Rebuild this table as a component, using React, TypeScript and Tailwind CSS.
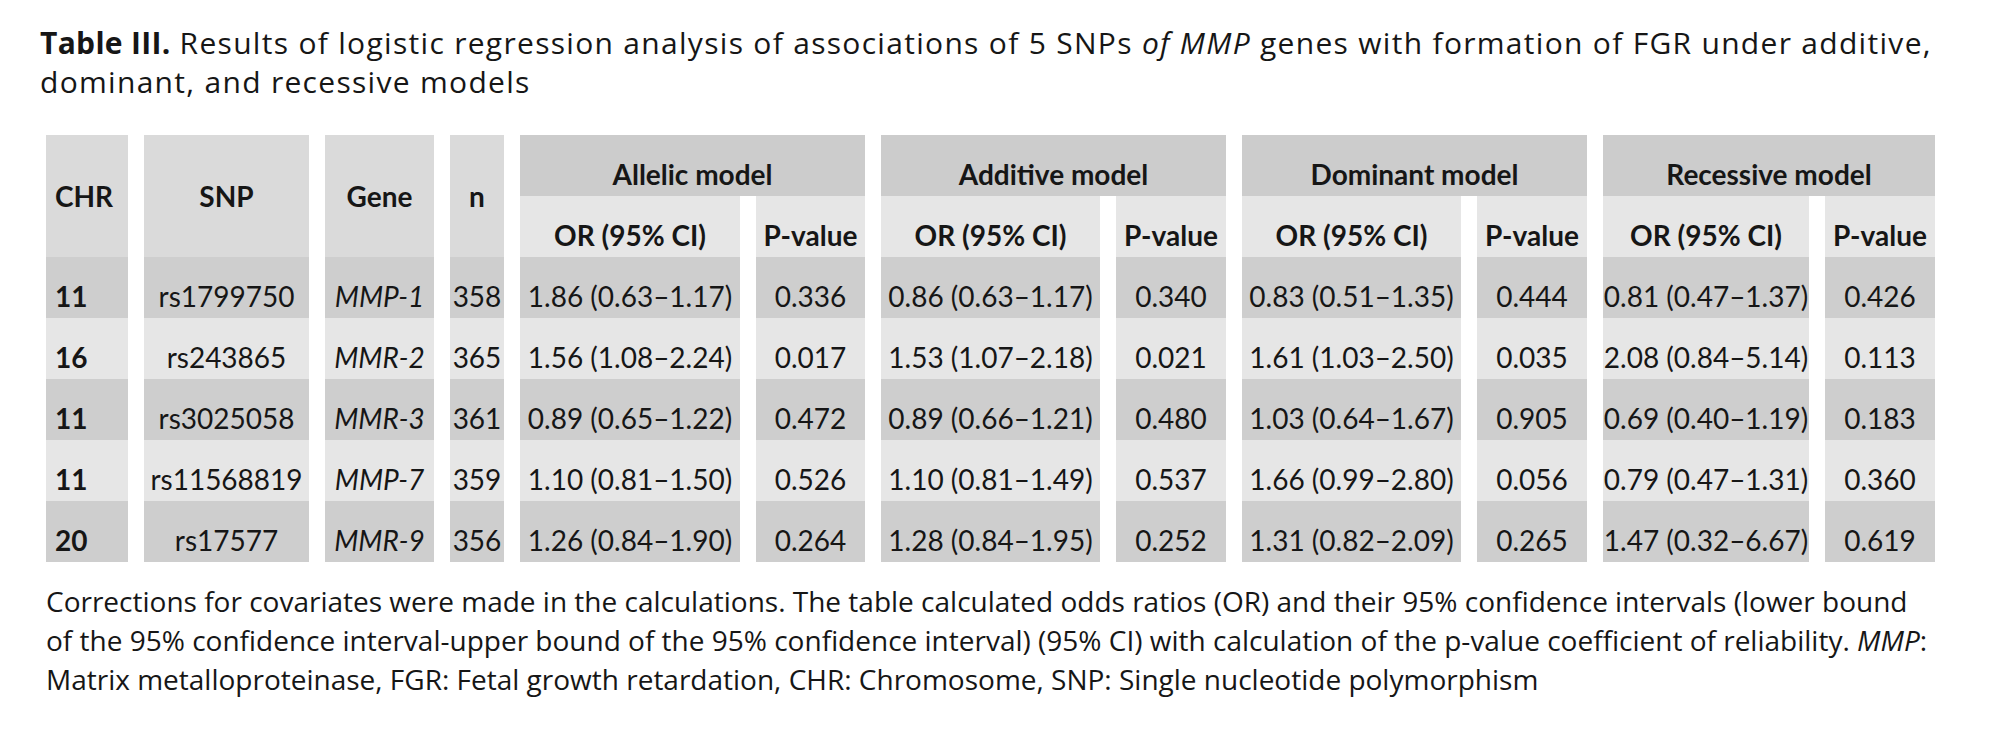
import React from "react";

type Row = { chr: string; snp: string; gene: string; n: string; v: string[] };

const rows: Row[] = [
  { chr: "11", snp: "rs1799750", gene: "MMP-1", n: "358", v: ["1.86 (0.63–1.17)", "0.336", "0.86 (0.63–1.17)", "0.340", "0.83 (0.51–1.35)", "0.444", "0.81 (0.47–1.37)", "0.426"] },
  { chr: "16", snp: "rs243865", gene: "MMR-2", n: "365", v: ["1.56 (1.08–2.24)", "0.017", "1.53 (1.07–2.18)", "0.021", "1.61 (1.03–2.50)", "0.035", "2.08 (0.84–5.14)", "0.113"] },
  { chr: "11", snp: "rs3025058", gene: "MMR-3", n: "361", v: ["0.89 (0.65–1.22)", "0.472", "0.89 (0.66–1.21)", "0.480", "1.03 (0.64–1.67)", "0.905", "0.69 (0.40–1.19)", "0.183"] },
  { chr: "11", snp: "rs11568819", gene: "MMP-7", n: "359", v: ["1.10 (0.81–1.50)", "0.526", "1.10 (0.81–1.49)", "0.537", "1.66 (0.99–2.80)", "0.056", "0.79 (0.47–1.31)", "0.360"] },
  { chr: "20", snp: "rs17577", gene: "MMR-9", n: "356", v: ["1.26 (0.84–1.90)", "0.264", "1.28 (0.84–1.95)", "0.252", "1.31 (0.82–2.09)", "0.265", "1.47 (0.32–6.67)", "0.619"] },
];

const models = ["Allelic model", "Additive model", "Dominant model", "Recessive model"];

const cell = "h-[61px] flex items-center justify-center pt-[18px] whitespace-nowrap";

export default function App() {
  return (
    <div className="min-h-[741px] bg-white text-[#161616] font-['Lato',sans-serif] text-[28px] leading-[39px]">
      <div className="pl-[40px] pt-[23px] font-['Open_Sans',sans-serif] text-[30px] tracking-[1.3px]">
        <p>
          <span className="block whitespace-nowrap">
            <span className="font-bold tracking-[0.3px]">Table III.</span> Results of logistic regression analysis of
            associations of 5 SNPs <i>of MMP</i> genes with formation of FGR under additive,
          </span>
          <span className="block whitespace-nowrap">dominant, and recessive models</span>
        </p>
      </div>
      <div className="pl-[46px] mt-[34px]">
        <div className="grid grid-cols-[82px_165px_109px_54px_220px_109px_219px_110px_219px_110px_206px_110px] gap-x-4 w-max">
          <div className="row-span-2 bg-[#dadada] font-bold flex items-center pl-[9px]">CHR</div>
          <div className="row-span-2 bg-[#dadada] font-bold flex items-center justify-center">SNP</div>
          <div className="row-span-2 bg-[#dadada] font-bold flex items-center justify-center">Gene</div>
          <div className="row-span-2 bg-[#dadada] font-bold flex items-center justify-center">n</div>
          {models.map((m) => (
            <div key={m} className={`col-span-2 bg-[#cccccc] font-bold ${cell}`}>
              {m}
            </div>
          ))}
          {models.map((m) => (
            <React.Fragment key={m + "s"}>
              <div className={`bg-[#e6e6e6] font-bold ${cell}`}>OR (95% CI)</div>
              <div className={`bg-[#e6e6e6] font-bold ${cell}`}>P-value</div>
            </React.Fragment>
          ))}
          {rows.map((r, i) => {
            const bg = i % 2 === 0 ? "bg-[#cecece]" : "bg-[#e6e6e6]";
            return (
              <React.Fragment key={r.snp}>
                <div className={`${bg} h-[61px] flex items-center pt-[18px] pl-[9px] font-bold`}>{r.chr}</div>
                <div className={`${bg} ${cell}`}>{r.snp}</div>
                <div className={`${bg} ${cell} italic`}>{r.gene}</div>
                <div className={`${bg} ${cell}`}>{r.n}</div>
                {r.v.map((x, j) => (
                  <div key={j} className={`${bg} ${cell}`}>
                    {x}
                  </div>
                ))}
              </React.Fragment>
            );
          })}
        </div>
        <p className="mt-[20px] font-['Open_Sans',sans-serif]">
          <span className="block whitespace-nowrap">
            Corrections for covariates were made in the calculations. The table calculated odds ratios (OR) and their 95%
            confidence intervals (lower bound
          </span>
          <span className="block whitespace-nowrap">
            of the 95% confidence interval-upper bound of the 95% confidence interval) (95% CI) with calculation of the
            p-value coefficient of reliability. <i>MMP</i>:
          </span>
          <span className="block whitespace-nowrap">
            Matrix metalloproteinase, FGR: Fetal growth retardation, CHR: Chromosome, SNP: Single nucleotide polymorphism
          </span>
        </p>
      </div>
    </div>
  );
}
